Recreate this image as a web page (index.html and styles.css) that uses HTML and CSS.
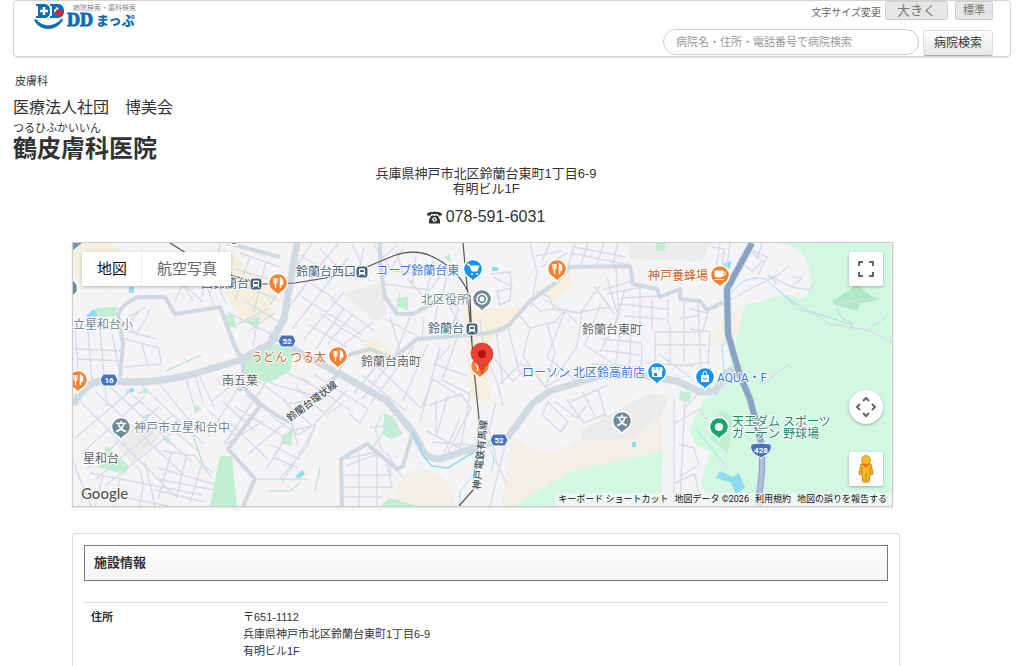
FILE: index.html
```html
<!DOCTYPE html>
<html lang="ja">
<head>
<meta charset="utf-8">
<meta name="viewport" content="width=device-width, initial-scale=1">
<title>鶴皮膚科医院 | DDまっぷ</title>
<link rel="stylesheet" href="styles.css">
</head>
<body>
<header class="site-header">
  <a class="logo" href="#" aria-label="DDまっぷ">
    <svg width="104" height="28" viewBox="33 2 104 28">
      <g fill="#0b6cb8">
        <path d="M36 5h8c4 0 6 2 6 7s-2 7-6 7h-8v-2h2V7h-2z"/>
        <path d="M50 5h8c4 0 6 3 6 7 0 5-3 7-7 7h-7v-2h2V7h-2z"/>
        <path d="M34 21l2-1c6 8 18 9 26-1l1 2c-7 12-23 12-29 0z"/>
      </g>
      <path d="M44 8v8M40 12h8M57 8.500v6M54 11.500h5" stroke="#fff" stroke-width="2.500"/>
      <rect x="56" y="11.500" width="8" height="5" rx="2.500" fill="#e61b2b" transform="rotate(35 60 13)"/>
      <text class="logo-caption" x="73" y="11">病院検索・歯科検索</text>
      <text class="logo-dd" x="67" y="27">DD</text>
      <text class="logo-kana" x="96" y="26">まっぷ</text>
    </svg>
  </a>
  <div class="tools">
    <div class="sizes">
      <span class="sizes-label">文字サイズ変更</span>
      <button class="size size-large" type="button">大きく</button>
      <button class="size" type="button">標準</button>
    </div>
    <form class="search">
      <input class="search-box" type="search" aria-label="病院検索" placeholder="病院名・住所・電話番号で病院検索">
      <button class="search-button" type="submit">病院検索</button>
    </form>
  </div>
</header>

<main class="page">
  <p class="department">皮膚科</p>
  <p class="corporation">医療法人社団　博美会</p>
  <p class="reading">つるひふかいいん</p>
  <h1 class="clinic">鶴皮膚科医院</h1>

  <div class="content">
    <p class="summary">兵庫県神戸市北区鈴蘭台東町1丁目6-9<br>有明ビル1F</p>
    <p class="phone">
      <svg width="15" height="13" viewBox="0 0 15 13" aria-hidden="true"><path d="M0 4.500V3C1 0 14 0 15 3v1.500h-4V3H4v1.500zM4 5h1.500V4h1v1h2V4h1v1H11l2 4v3.500h-11V9z" fill="#333"/><circle cx="7.500" cy="8.500" r="2.300" fill="#fff"/><circle cx="7.500" cy="8.500" r="1" fill="#333"/></svg>
      078-591-6031
    </p>

    <section class="map" aria-label="地図">
      <svg class="map-canvas" viewBox="73 244 819 263">
        <defs>
          <path id="pin" d="M-5 8A9.500 9.500 0 1 1 5 8Q1.500 10 0 13Q-1.500 10-5 8z" stroke="#fff" stroke-width="1.500"/>
          <g id="fork" stroke="#fff" fill="none"><path d="M-4-5v4q0 1.500 1.500 1.500T-1-1v-4M-2.500-5V5" stroke-width="1.200"/><path d="M2.500 5V-5q2.500 1 2 6h-2" stroke-width="1.500" fill="#fff"/></g>
          <g id="station"><rect x="-6" y="-6" width="12" height="12" rx="3" fill="#47637e" stroke="#fff"/><rect x="-3" y="-3.500" width="6" height="6" rx="1" fill="#fff"/><path d="M-2-2h4v2h-4z" fill="#47637e"/><path d="M-2 2l-1.500 2M2 2l1.500 2" fill="none" stroke="#fff"/></g>
          <path id="shield" d="M-6-6H6L9 0 6 6H-6L-9 0z" fill="#4774bd" stroke="#fff"/>
        </defs>
        <rect x="73" y="244" width="819" height="263" fill="#f4f3f5"/>

        <g fill="#f6efdf">
          <path d="M73 244h34l24 10-20 38-38-17zM205 250l25 2 53 52-48-2-30-20zM228 300l33-5 14 22-30 8zM465 310l55-2-8 22-32 18 12 55-22-5zM540 290l28-18 6 14-22 16zM360 352l12-15 22 18-14 8-20-3z"/>
          <path d="M728 315l25-10-9 58-10 7-5-22-22-5z" fill="#f3f0e6"/>
          <path d="M513 437q22 20 44 15l26-15 80-24v39l-93 21-57 34h-12zM393 507q6-34 24-37 34 0 38 37z" fill="#f3efe7"/>
        </g>
        <g fill="#ecebec">
          <path d="M343 295l37-12 7 32-10 8zM580 432l67-37 23 2-8 18-29 24-50 2zM630 244h80l-8 18-72-2zM112 442l30-18 18 14-28 27zM215 378l30-4-5 16-22-3z"/>
        </g>
        <g fill="#d3f8e2">
          <path d="M783 244h109v263H757l-46-2-10-21 9-31-15-8-6-14 12-25 27-33 18-68 14-2q14-8 30-7 22 10 20-18-1-32-35-34z"/>
          <path d="M513 507l57-34 93-21-2 55z"/>
        </g>
        <g fill="#c0efd2">
          <path d="M243 362l34-17 17 6-4 21-20 12-27-8zM97 468l10-21 22 20-4 8zM220 457h12l5 50h-27zM384 414l10 5 8 16-11 5-8-5zM281 437l12-6-2 16-10-3zM90 312l8-3 19-1-2 10-17-1zM225 316l8-1 4 14-12-2zM246 322l14-5-2 14zM396 300l12-3v15l-9-4zM656 244h9v8h-9zM196 405l6 6-8 2zM140 418l10-4-3 8zM161 437l10 3-3 6zM137 395l9-6 3 5zM680 392l12 2-3 9-10-2zM710 440l10-30 13 8-5 36zM444 258l6-3 1 9zM380 507l10-8 28 8z"/>
          <path d="M833 302l24-16 10 8 11 7-18 3-3 8-24-7z" fill="#aee8c5"/>
        </g>
        <g fill="#8fdcf2">
          <path d="M85 318l9-8 4 7zM125 395l7-7 3 4zM129 288h5v6h-5zM235 391l7-2v3zM295 478l7-7 3 4-6 4zM632 443h4v5h-4zM722 265l10-3-3 9zM720 472l13 6 6-4 6 15-9 6-6-12-14-4zM492 268h6v4h-6z"/>
        </g>

        <g class="minor">
          <path d="M75 330l3 40M88 332l4 50M100 332l7 75M112 335l8 40M78 350l44 2M78 360l45 2M125 340l34 9 2 16-37 3M142 345l5 20M128 332l28 8M74 440l54-46M81 455l64-58M87 470l72-62M96 480l78-65M106 486l76-60M80 402l95 95M96 393l88 83M110 388l82 75M125 390l73 62M142 387l62 58M160 386l36 43M73 462l18 45M90 474l112 22M94 492l74 15M103 477l-8 30M120 480l-6 27M136 466q12 14 3 41M145 463l10 44"/>
          <path d="M163 452l32 5 17 22M158 469l56 16M157 480l57 11M156 491l48 12M172 452l-14 48M187 455l-11 45M202 464l-12 40M140 311l-12 14 8 10 10-15 4-10M146 308l-20 11M175 302l8-17 20 18M180 280l10-14 17 8-5 24M208 290l6 16M217 286l10 20M193 302l-15-24M220 244l-5 35 20 12M240 254l40 14M235 270l47 14M235 284l40 15M250 257l-15 45M266 263l-12 50M244 302l34 20M227 313l54 27M238 325l30-15M253 348l4-25M248 332l27-18"/>
          <path d="M225 444l44-65M240 386l-32 52M212 402l25-20 3 6M200 378l14 30M221 401l34 31M209 412l30 28M195 374l8 30M186 379l10 35M255 380l35 25 40-8M270 384l48 14M284 372l35 18M245 396l38 24M235 408l46 28M230 424l38 36M224 446l40-24M248 455l38-32M266 470l27-42M282 484l31-52M255 480h52M280 480l27-32 8-22-24 6M270 416l28 20 15-10 34-35M283 402l30 25M296 388l30 28 15-10M300 378l53 35M313 375l55 35-8 14-12-10M270 445l30 16M273 458l25 11M290 417l8 30"/>
          <path d="M343 476h48l-2-14-23-17M343 488h49l-6-27M342 498h40M359 453v54M377 450v57M345 460l32-7M346 467l32-12M383 414l-8 16 7 22 6 4 14 22M370 429l24-4 8 10M374 447l12-18M389 420l10-8 16 20M350 383l38 22M362 376l44 36M378 368l43 41M384 358l-30 36M400 350l-38 50M414 347l-44 58M428 345l-25 56M440 348l-20 75M452 345l-18 20 34 12M457 339l-15 42 28 14M421 410l12-30 28 18M430 406l31-11 10 14-26 50M436 400v33M448 396l-12 42M460 420l-16 34M470 395l-10 56M426 432l48 24M432 443l42 3M480 345l18 40 5 22M488 352l25 30 14-12M500 385l20-20 10 3"/>
          <path d="M280 320l45-60 14-16M270 306l42-62M292 330l56-71M304 340l40-47M316 350l27-40M328 345l25-30M340 348l33-25M330 300l45 32M320 315l44 28M309 326l38 22M302 298l60 38M310 284l28 18M292 270l24 12M300 256l33 20M320 250l30 30M352 245l18 38M364 249l-8 32M381 260l17-14M374 246l17 24 13-22M384 271l36 4 14-13M385 285l45 6 10-13M396 252l8 24M416 257l-4 28M408 280l24 28M400 294l-4 20M434 263l-9 35M448 270l-6 30M425 300l34 8-8 24M445 300l18 30M385 320l34 18M390 318l10 34M410 318l-15 38M424 318l-2 22M438 305l-6 30M455 318l-9 20"/>
          <path d="M530 245l7 28-6 35M535 257l27-5M541 268l27-14M550 244l-8 18M575 244l-7 24M588 244l-8 24M604 244l-8 24M618 244l-6 24M570 254l60 12M575 248l50 10M545 263l22 6M536 292l13 6 5 12-14 2-9-9M543 300l24 14 10 10M553 310l27 4 20-27M580 313l30-5-15-19M490 275l20-2 2 16-15 3 3 14 10-5 1-14-18-9M480 320l7 55M496 330l7 55M507 325l13 50M520 317l10 12 25-6 10-12 16 3M530 329l-7 28 25 35M547 325l8 28-9 35 25-15M565 312l-18 46 30 25M582 313l-5 35-22 30M600 306l-15 40 30 20-5 15M595 288l20 28M607 279l10 34M616 268l3 50-19 35"/>
          <path d="M632 282l-30 9M642 288l-35 7M625 290l-12 42M640 290v40M658 297l-37 2M652 300v30M668 300v25M620 305l46 5M624 317l42 3M655 333h48M655 346h52M655 332v32M670 325v42M684 303v60M698 303l3 70M620 334l-6 44M631 330l-2 50M642 345l-1 34M600 351l42 5M592 365l49 3M603 340l39 4M646 364l48 3M660 356l30 22M690 310l18 4-6 20M680 320l20-4M542 416l19 17 7-10-20-20zM554 402l23 17 9-12M566 400l18 24 22-9M583 393l12 25M598 390l8 28M570 403l38-17M496 403l-7 28 7 28M507 438l-17 69M495 460l12 25M674 400v107M685 398l-5 109M674 425l26-15 8 13M684 410l13-14M679 445l15 4 5 17-20 12M675 484l20-9 6 32M740 262l10-10 13 10-11 10zM753 252l14 6-9 18M728 302l30-16 20-10 10-8M767 276l25 12 18 3 6-9M792 287l10-8-10-1M777 285l-9-9M780 292l18 18 18 6 14 9 38 6 25 13M868 331l20-15M838 304l40-5M838 304q-6 12 13 19l1 8M762 386l25-20 5 3M690 330l20 3-2 35M680 367l30-4M712 248l12 2-2 18M720 244l-4 25M730 244l-3 24"/>
        </g>
        <g class="medium">
          <path d="M120 378l3-33-5-30q4-10 20-17h27l10 17 45-7 15 40 8 14v25l17 20-32 43 27 30-12 27M227 244l53 14M243 387q22 26 47 36l23-23 25-25M380 244v20l5 34 12 17h16l24-13M417 340l-24 20-23-10-22 6-12 17M342 507l-1-47 26-15 30 25 6-3 10-34M417 340l40-3 23-2q20-2 30-10l20-23 27-19 13-15 60-1 3 18 24 5 3 8 20-8v10l20 2 7 9 17-8"/>
        </g>
        <path class="road" d="M73 406q12-25 37-25 30 6 80-5l47-14 33-17 14-25 13-76M270 335l27 17 43 23 47 27 26 31 10 19q5 8 17 8l37-12 30-9 26-35 17-12 50-15 40-1 37 6 23 11 15-1 12-18 14-8"/>
        <path d="M413 433l11 25 8 9 16 2 29-18" fill="none" stroke="#8fdcf2" stroke-width="1.500"/>
        <path d="M460 506v-14l12-14M490 450q7 10 1 22M727 300q16-26 39-20l20 18 20 13 22 7 25 8M696 430l28 35M757 260l5-16M725 385l-3-38 6-7" fill="none" stroke="#9be2f2"/>
        <path d="M193 436l10 30 10 8M166 372l35-16M270 492h20l10-8M320 469l-5 23" fill="none" stroke="#a6dfc1"/>
        <g fill="none">
          <path d="M752 244l-25 46 1 45 12 42 10 23 12 47v25l-4 35" stroke="#d5e3ef" stroke-width="8"/>
          <path d="M752 244l-25 46 1 45 12 42 10 23 12 47v25l-4 35" stroke="#89a4c3" stroke-width="6"/>
          <path d="M762 447v25l-4 35" stroke="#b2c1d6" stroke-width="4"/>
          <path d="M73 244h9l-9 7z" fill="#6e91bd"/>
          <path class="rail" d="M170 244l16 10 47 23 30 8 32-1 55-9 43-18q24-9 44 3 24 13 33 38l2 47M463 244l5 54 4 47 3 35 4 40-5 70-15 17"/>
        </g>

        <g class="poi">
          <g transform="translate(278 284)"><use href="#pin" fill="#f58230"/><use href="#fork"/></g>
          <g transform="translate(557 270)"><use href="#pin" fill="#f58230"/><use href="#fork"/></g>
          <g transform="translate(338 357)"><use href="#pin" fill="#f58230"/><use href="#fork"/></g>
          <g transform="translate(78 381)"><use href="#pin" fill="#f58230"/><use href="#fork"/></g>
          <g transform="translate(480 367)"><use href="#pin" fill="#f58230"/><use href="#fork"/></g>
          <g transform="translate(720 276)"><use href="#pin" fill="#f58230"/><path d="M-5-4h8v4q0 2-2 2h-4q-2 0-2-2zM-5 4.500h9" fill="#fff" stroke="#fff"/><path d="M3-3h2v3H3" fill="none" stroke="#fff"/></g>
          <g transform="translate(473 270)"><use href="#pin" fill="#1193f5"/><path d="M-6-5h2l3 7h5l2-5h-9z" fill="#fff" stroke="#fff"/><circle cx="-1" cy="5" r="1" fill="#fff"/><circle cx="4" cy="5" r="1" fill="#fff"/></g>
          <g transform="translate(657 373)"><use href="#pin" fill="#1193f5"/><path d="M-5-5H5l1 4H-6zM-5-1H5v6H-5z" fill="#fff"/><path d="M-3 1h3v3h-3z" fill="#1193f5"/><path d="M-2-5v3M2-5v3" stroke="#1193f5" fill="none"/></g>
          <g transform="translate(705 378)"><use href="#pin" fill="#1193f5"/><rect x="-4" y="-2" width="8" height="7" fill="#fff"/><path d="M-2-2q0-4 2-4t2 4" fill="none" stroke="#fff"/><path d="M-2 1q2 3 4 0" fill="none" stroke="#1193f5"/></g>
          <g transform="translate(482 300)"><use href="#pin" fill="#728b99"/><circle r="5" fill="none" stroke="#fff" stroke-width="1.500"/><circle r="2.500" fill="#fff"/></g>
          <g transform="translate(719 428)"><use href="#pin" fill="#16a66f"/><circle r="4" fill="#fff"/></g>
          <g transform="translate(121 428)"><use href="#pin" fill="#728b99"/><text class="school" y="4">文</text></g>
          <g transform="translate(622 422)"><use href="#pin" fill="#728b99"/><text class="school" y="4">文</text></g>
          <use href="#station" x="362" y="273"/><use href="#station" x="256" y="285"/><use href="#station" x="472" y="330"/>
          <path d="M69 280a9 9 0 0 1 4 17" fill="#728b99" stroke="#fff" stroke-width="2"/>
          <circle cx="234" cy="239" r="7" fill="#777" stroke="#fff" stroke-width="2"/>
        </g>
        <g class="route">
          <use href="#shield" x="287" y="342"/><text x="287" y="345">52</text>
          <use href="#shield" x="109" y="381"/><text x="109" y="384">16</text>
          <use href="#shield" x="499" y="441"/><text x="499" y="444">52</text>
          <path d="M751 445q10-2 20 0 3 8-10 14-13-6-10-14z" fill="#4774bd" stroke="#fff"/><text x="761" y="454">428</text>
        </g>
        <g class="label">
          <g fill="#47637e"><text x="296" y="277">鈴蘭台西口</text><text x="201" y="289">西鈴蘭台</text><text x="428" y="334">鈴蘭台</text></g>
          <g fill="#6f8795"><text x="421" y="305">北区役所</text><text x="73" y="330">立星和台小</text><text x="134" y="433">神戸市立星和台中</text></g>
          <g fill="#3478e5"><text x="376" y="276">コープ鈴蘭台東</text><text x="522" y="378">ローソン 北区鈴高前店</text><text x="717" y="383">AQUA・F</text></g>
          <g fill="#cc651f"><text x="648" y="281">神戸養蜂場</text><text x="251" y="363">うどん つる太</text></g>
          <g fill="#238568"><text x="732" y="427">天王ダム スポーツ</text><text x="732" y="439">ガーデン 野球場</text></g>
          <g fill="#5c6266"><text x="582" y="335">鈴蘭台東町</text><text x="361" y="367">鈴蘭台南町</text><text x="222" y="386">南五葉</text><text x="83" y="464">星和台</text></g>
          <g fill="#46525c"><text class="small" transform="translate(290 423) rotate(-37)">鈴蘭台環状線</text><text class="small" transform="translate(480 491) rotate(-84)">神戸電鉄有馬線</text></g>
        </g>
        <path d="M482 375q-1-6-6-11-5-5-5-9a11 11 0 0 1 22 0q0 5-5 10-5 5-6 10z" fill="#ea4335" stroke="#c5221f" stroke-width=".5"/><circle cx="482" cy="355" r="4" fill="#b31412"/>
        <text class="google" x="81" y="500">Google</text>
      </svg>
      <div class="map-types">
        <button class="map-type is-on" type="button">地図</button>
        <button class="map-type" type="button">航空写真</button>
      </div>
      <button class="map-control fullscreen" type="button" aria-label="全画面表示"><svg width="18" height="18" viewBox="0 0 18 18"><path d="M2 6V2h4M12 2h4v4M16 12v4h-4M6 16H2v-4" fill="none" stroke="#666" stroke-width="2"/></svg></button>
      <button class="map-control camera" type="button" aria-label="カメラ操作"><svg width="22" height="22" viewBox="0 0 22 22"><path d="M8 5l3-3 3 3M8 17l3 3 3-3M5 8l-3 3 3 3M17 8l3 3-3 3" fill="none" stroke="#666" stroke-width="2"/></svg></button>
      <button class="map-control pegman" type="button" aria-label="ストリートビュー"><svg width="18" height="28" viewBox="0 0 18 28"><path d="M4 9q5-2 10 0l2 10-3 1-1 7H6l-1-7-3-1z" fill="#fbb827" stroke="#c88615"/><path d="M9 18v9M5 12v7M13 12v7" stroke="#c88615"/><circle cx="9" cy="5" r="4.500" fill="#fbb827" stroke="#c88615" stroke-width=".7"/><path d="M5 9h8l-4 4z" fill="#e8711a"/></svg></button>
      <div class="map-legal">
        <button class="legal-item" type="button">キーボード ショートカット</button>
        <span class="legal-item">地図データ ©2026</span>
        <a class="legal-item" href="#">利用規約</a>
        <a class="legal-item" href="#">地図の誤りを報告する</a>
      </div>
    </section>

    <section class="panel">
      <h2 class="panel-title">施設情報</h2>
      <table class="facts">
        <tr><th scope="row">住所</th><td>〒651-1112<br>兵庫県神戸市北区鈴蘭台東町1丁目6-9<br>有明ビル1F</td></tr>
      </table>
    </section>
  </div>
</main>
</body>
</html>
```
FILE: styles.css
```css
* { box-sizing: border-box; }
body {
  margin: 0 13px;
  background: #fff;
  color: #333;
  font-family: "Liberation Sans", "Noto Sans CJK JP", sans-serif;
  font-size: 11px;
}
p, h1, h2 { margin: 0; }
button, input { font-family: inherit; }
button { cursor: pointer; }

.site-header {
  display: flex;
  justify-content: space-between;
  align-items: flex-start;
  min-height: 57px;
  padding: 0 17px 0 19px;
  border: 1px solid #d5d5d5;
  border-radius: 4px;
  box-shadow: 0 1px 2px #ddd;
}
.logo { display: block; }
.logo svg { display: block; }
.logo-caption { font-size: 7px; fill: #888; }
.logo-dd { font: bold 18px "Liberation Serif", serif; fill: #0b6cb8; stroke: #0b6cb8; stroke-width: 1px; }
.logo-kana { font-size: 13px; font-weight: 900; fill: #0b6cb8; }
.tools { display: flex; flex-direction: column; align-items: flex-end; gap: 5px; }
.sizes { display: flex; align-items: flex-start; }
.sizes-label { margin-right: 4px; color: #666; font-size: 10px; line-height: 23px; }
.size {
  height: 19px;
  padding: 0 7px;
  border: 1px solid #d0d0d0;
  border-radius: 2px;
  background: #e6e6e6;
  color: #76766c;
  font-size: 11px;
  line-height: 17px;
}
.size-large { margin-right: 7px; padding: 0 11px; font-size: 13px; }
.search { display: flex; align-items: flex-start; gap: 4px; margin: 0; }
.search-box {
  width: 256px;
  height: 26px;
  padding: 0 12px;
  border: 1px solid #ccc;
  border-radius: 13px;
  background: #fff;
  font-size: 11px;
  line-height: 22px;
}
.search-box::placeholder { color: #999; opacity: 1; }
.search-button {
  height: 26px;
  margin-top: 1px;
  padding: 0 10px;
  border: 1px solid #ddd;
  border-bottom-color: #aaa;
  border-radius: 3px;
  background: linear-gradient(#fff, #e6e6e6);
  color: #333;
  font-size: 12px;
  line-height: 22px;
}

.page { padding-top: 16px; }
.department { padding-left: 2px; line-height: 16px; }
.corporation { margin-top: 7px; font-size: 16px; line-height: 24px; }
.reading { margin-top: 2px; line-height: 12px; }
.clinic { font-size: 24px; line-height: 30px; }
.content { margin: 0 111px 0 59px; }
.summary { padding-top: 2px; text-align: center; font-size: 13px; line-height: 15px; }
.phone {
  display: flex;
  justify-content: center;
  align-items: center;
  gap: 4px;
  margin-top: 11px;
  font-size: 16px;
  line-height: 20px;
}

.map {
  position: relative;
  margin: 15px 7px 0 0;
  border: 1px solid #ccc;
  box-shadow: 0 1px 2px #ddd;
}
.map-canvas { display: block; width: 100%; height: auto; overflow: hidden; }
.minor, .medium, .road { fill: none; stroke-linejoin: round; }
.minor { stroke: #d7dce4; stroke-width: 1.4px; }
.medium { stroke: #d0d9e2; stroke-width: 4px; }
.road { stroke: #cfdae3; stroke-width: 7px; }
.rail { stroke: #555; stroke-width: 1.2px; }
.label { font-family: Roboto, "Noto Sans CJK JP", sans-serif; font-size: 12px; }
.label text { paint-order: stroke; stroke: #fff; stroke-width: 2px; stroke-linejoin: round; }
.label .small { font-size: 10px; font-weight: 500; }
.school { font: bold 11px "Noto Sans CJK JP", sans-serif; fill: #fff; text-anchor: middle; }
.route { font: bold 8px Roboto, sans-serif; fill: #fff; text-anchor: middle; }
.google { font: 500 15px Lato, sans-serif; fill: #555; paint-order: stroke; stroke: #fff; stroke-width: 2px; }

.map-types {
  position: absolute;
  top: 9px;
  left: 9px;
  display: flex;
  box-shadow: 0 1px 3px rgba(0, 0, 0, .25);
}
.map-type {
  height: 34px;
  padding: 0 14px 0 15px;
  border: 0;
  background: #fff;
  color: #666;
  font-size: 15px;
  line-height: 32px;
}
.map-type.is-on { border-right: 1px solid #eee; color: #111; }
.map-control {
  position: absolute;
  right: 9px;
  display: grid;
  place-items: center;
  width: 34px;
  height: 34px;
  padding: 0;
  border: 0;
  border-radius: 2px;
  background: #fff;
  box-shadow: 0 1px 3px rgba(0, 0, 0, .3);
}
.fullscreen { top: 9px; }
.camera { bottom: 82px; border-radius: 50%; }
.pegman { bottom: 20px; }
.map-legal {
  position: absolute;
  right: 0;
  bottom: 0;
  display: flex;
  padding-right: 2px;
  background: rgba(245, 245, 245, .75);
}
.legal-item {
  padding: 0 3px;
  border: 0;
  background: none;
  color: #111;
  font: 9px/13px Roboto, "Noto Sans CJK JP", sans-serif;
  text-decoration: none;
}

.panel {
  margin-top: 26px;
  padding: 11px;
  border: 1px solid #ddd;
  border-radius: 3px;
  box-shadow: 0 0 1px #ddd;
}
.panel-title {
  padding: 0 9px;
  border: 1px solid #777;
  background: linear-gradient(#fff, #f5f5f5);
  font-size: 13px;
  line-height: 34px;
}
.facts { width: 100%; margin-top: 21px; border-collapse: collapse; border-top: 1px solid #ddd; }
.facts th, .facts td { padding: 6px 7px; text-align: left; vertical-align: top; line-height: 17px; }
.facts th { width: 152px; }
```
